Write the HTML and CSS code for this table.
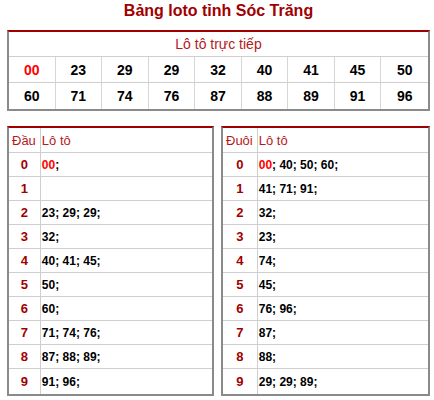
FILE: index.html
```html
<!DOCTYPE html>
<html lang="vi">
<head>
<meta charset="utf-8">
<title>Bảng loto tỉnh Sóc Trăng</title>
<link rel="stylesheet" href="styles.css">
</head>
<body>
<div class="page">
  <h1 class="title">Bảng loto tỉnh Sóc Trăng</h1>
  <table class="direct">
    <tr><th colspan="9" class="direct-head">Lô tô trực tiếp</th></tr>
    <tr class="r1">
      <td class="hot">00</td><td>23</td><td>29</td><td>29</td><td>32</td><td>40</td><td>41</td><td>45</td><td>50</td>
    </tr>
    <tr class="r2">
      <td>60</td><td>71</td><td>74</td><td>76</td><td>87</td><td>88</td><td>89</td><td>91</td><td>96</td>
    </tr>
  </table>
  <div class="pair">
    <table class="lo left">
      <tr><th class="key">Đầu</th><th class="val">Lô tô</th></tr>
      <tr><td class="key">0</td><td class="val"><span class="hot">00</span>;</td></tr>
      <tr><td class="key">1</td><td class="val"></td></tr>
      <tr><td class="key">2</td><td class="val">23; 29; 29;</td></tr>
      <tr><td class="key">3</td><td class="val">32;</td></tr>
      <tr><td class="key">4</td><td class="val">40; 41; 45;</td></tr>
      <tr><td class="key">5</td><td class="val">50;</td></tr>
      <tr><td class="key">6</td><td class="val">60;</td></tr>
      <tr><td class="key">7</td><td class="val">71; 74; 76;</td></tr>
      <tr><td class="key">8</td><td class="val">87; 88; 89;</td></tr>
      <tr class="last"><td class="key">9</td><td class="val">91; 96;</td></tr>
    </table>
    <table class="lo right">
      <tr><th class="key">Đuôi</th><th class="val">Lô tô</th></tr>
      <tr><td class="key">0</td><td class="val"><span class="hot">00</span>; 40; 50; 60;</td></tr>
      <tr><td class="key">1</td><td class="val">41; 71; 91;</td></tr>
      <tr><td class="key">2</td><td class="val">32;</td></tr>
      <tr><td class="key">3</td><td class="val">23;</td></tr>
      <tr><td class="key">4</td><td class="val">74;</td></tr>
      <tr><td class="key">5</td><td class="val">45;</td></tr>
      <tr><td class="key">6</td><td class="val">76; 96;</td></tr>
      <tr><td class="key">7</td><td class="val">87;</td></tr>
      <tr><td class="key">8</td><td class="val">88;</td></tr>
      <tr class="last"><td class="key">9</td><td class="val">29; 29; 89;</td></tr>
    </table>
  </div>
</div>
</body>
</html>
```

FILE: styles.css
```css
html, body {
  margin: 0;
  padding: 0;
  background: #fff;
}
body {
  font-family: "Liberation Sans", Arial, sans-serif;
  color: #000;
}
.page {
  padding: 2px 4px 0 7px;
  width: 423px;
}
.title {
  margin: 0;
  font-size: 16px;
  line-height: 18px;
  font-weight: bold;
  color: #a10000;
  text-align: center;
}
table {
  border-collapse: separate;
  border-spacing: 0;
  box-sizing: border-box;
}
.direct {
  margin-top: 10px;
  width: 423px;
  table-layout: fixed;
  border: 2px solid #8a8a8a;
  border-top: 2px solid #a00000;
}
.direct th, .direct td {
  padding: 0;
  text-align: center;
}
.direct-head {
  height: 24px;
  font-size: 14px;
  font-weight: normal;
  color: #b51a1a;
  border-bottom: 1px solid #cfcfcf;
}
.direct td {
  font-size: 14px;
  font-weight: bold;
  border-right: 1px solid #d6d6d6;
}
.direct td:last-child {
  border-right: none;
}
.direct .r1 td {
  height: 25px;
  border-bottom: 1px solid #cfcfcf;
}
.direct .r2 td {
  height: 26px;
}
.hot {
  color: #ff0000;
}
.pair {
  display: flex;
  gap: 7px;
  margin-top: 15px;
}
.lo {
  border: 2px solid #8a8a8a;
  border-top: 2px solid #a00000;
}
.lo.left {
  width: 207px;
}
.lo.right {
  width: 209px;
}
.lo th, .lo td {
  padding: 0;
  border-bottom: 1px solid #cfcfcf;
}
.lo .last td {
  border-bottom: none;
}
.lo th {
  height: 24px;
  font-size: 13px;
  font-weight: normal;
  color: #b51a1a;
  text-align: left;
}
.lo th.key {
  padding-left: 3px;
  padding-right: 4px;
}
.lo th.val {
  padding-left: 1px;
}
.lo td {
  height: 23px;
  font-size: 12px;
  font-weight: bold;
}
.lo .key {
  border-right: 1px solid #cfcfcf;
  white-space: nowrap;
}
.lo td.key {
  text-align: center;
  color: #a00000;
  font-size: 13px;
}
.lo td.val {
  padding-left: 1px;
  width: 100%;
}
.lo .last td {
  height: 25px;
}
```
